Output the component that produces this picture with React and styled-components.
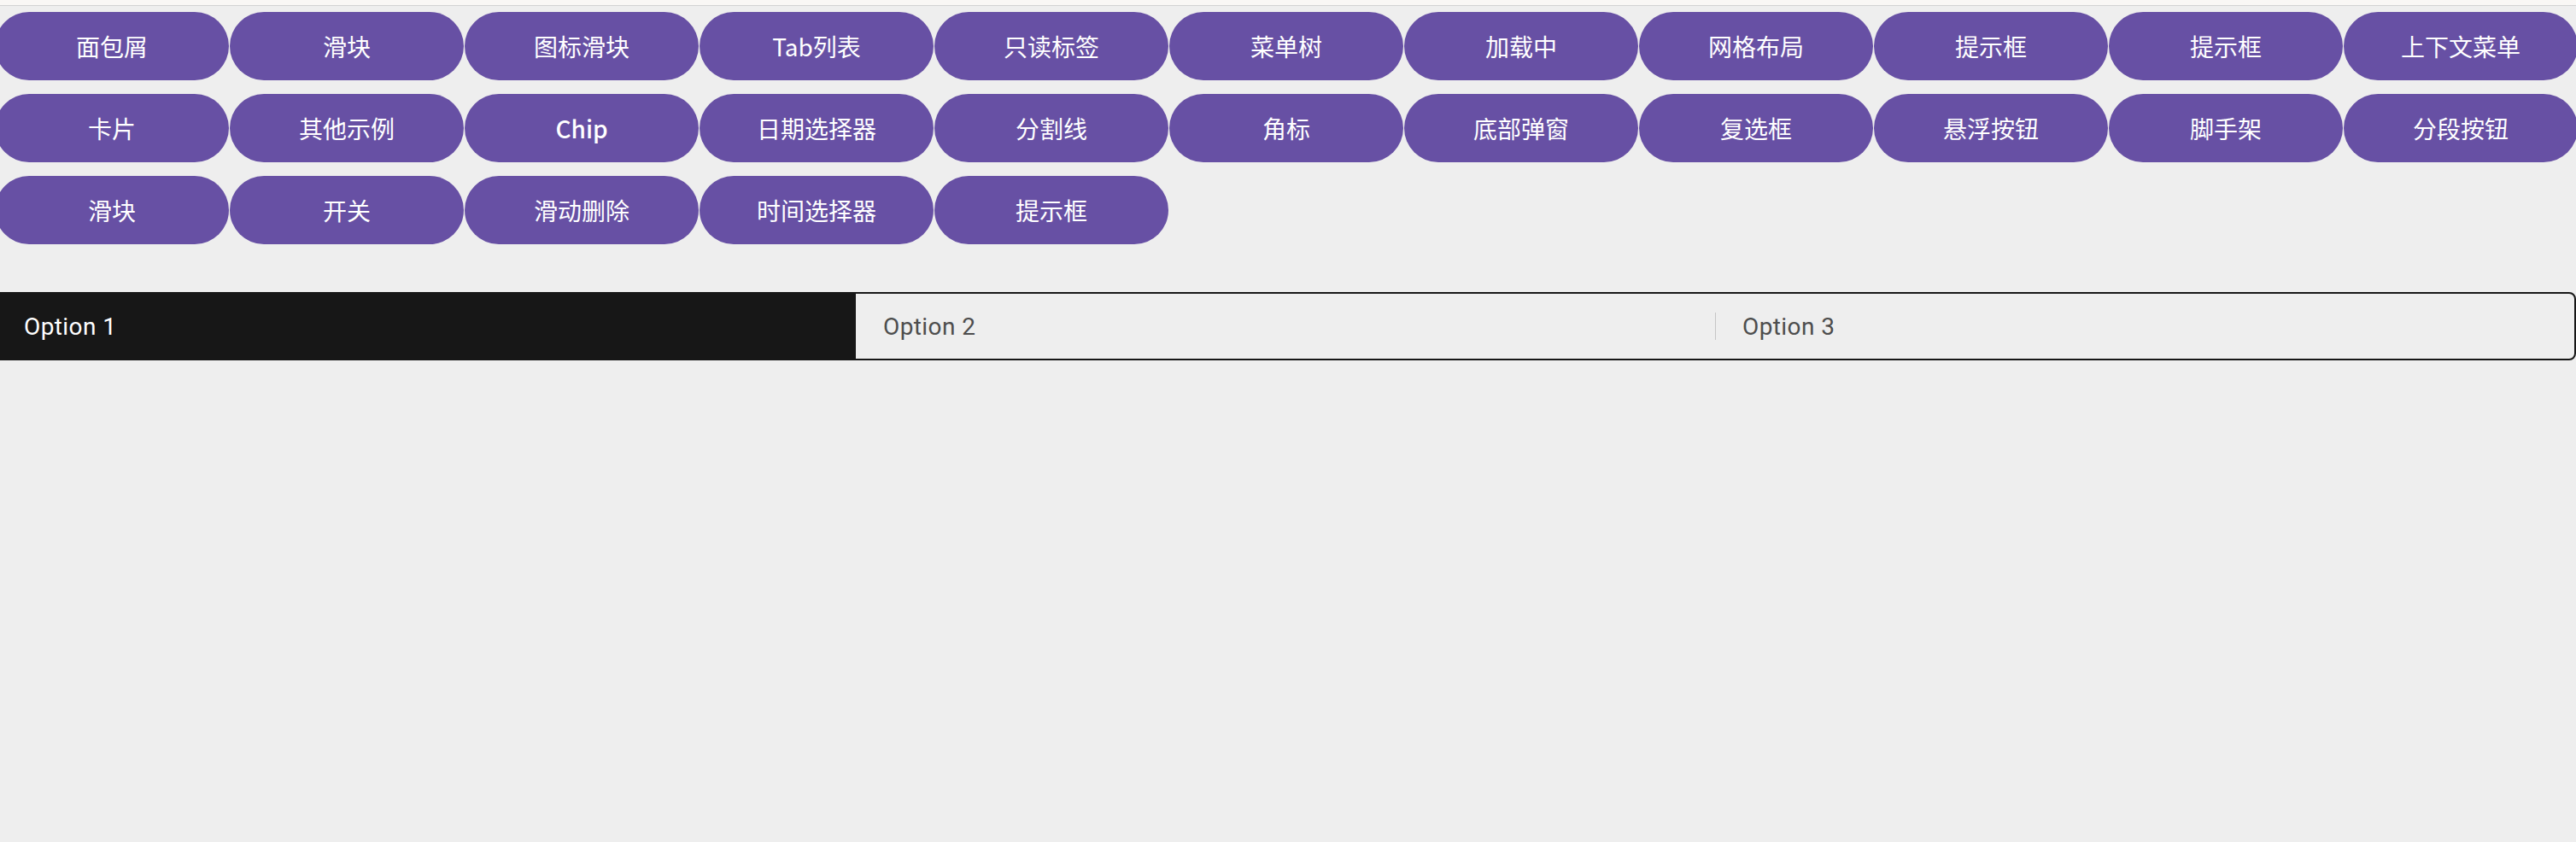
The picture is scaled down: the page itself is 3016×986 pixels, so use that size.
import React, { useState } from 'react';
import styled, { createGlobalStyle } from 'styled-components';

const GlobalStyle = createGlobalStyle`
  html, body {
    margin: 0;
    padding: 0;
    background: #eeeeee;
    overflow: hidden;
  }
  * {
    box-sizing: border-box;
  }
`;

const Page = styled.div`
  width: 3016px;
  min-height: 986px;
  background: #eeeeee;
  overflow: hidden;
  font-family: "Noto Sans CJK SC", "Noto Sans", sans-serif;
`;

const TopStrip = styled.div`
  height: 7px;
  background: #f9f7f5;
  border-bottom: 1px solid #d2d2d2;
`;

const ButtonGrid = styled.div`
  display: grid;
  grid-template-columns: repeat(11, 274px);
  column-gap: 1px;
  row-gap: 16px;
  margin: 7px 0 0 -6px;
`;

const NavButton = styled.button`
  height: 80px;
  border: none;
  border-radius: 40px;
  background: #6750a4;
  color: #ffffff;
  font-family: "Noto Sans CJK SC", "Noto Sans", sans-serif;
  font-size: 28px;
  font-weight: ${(p) => (p.$latin ? 500 : 400)};
  padding: 0 16px;
  cursor: pointer;
  white-space: nowrap;
`;

const Segmented = styled.div`
  display: flex;
  margin: 56px 0 0 -6px;
  width: 3022px;
  height: 80px;
  border: 2px solid #171717;
  border-radius: 0 8px 8px 0;
  overflow: hidden;
`;

const Segment = styled.button`
  flex: 1;
  display: flex;
  align-items: center;
  height: 100%;
  padding: 0 0 0 32px;
  border: none;
  background: ${(p) => (p.$active ? '#171717' : 'transparent')};
  color: ${(p) => (p.$active ? '#ffffff' : '#4d4d4d')};
  font-family: Roboto, "Noto Sans", sans-serif;
  font-size: 28px;
  letter-spacing: 0.4px;
  text-align: left;
  cursor: pointer;
`;

const Divider = styled.span`
  width: 1px;
  height: 32px;
  margin-left: -32px;
  margin-right: 31px;
  background: ${(p) => (p.$hidden ? 'transparent' : '#c6c6c6')};
`;

const labels = [
  '面包屑', '滑块', '图标滑块', 'Tab列表', '只读标签', '菜单树', '加载中', '网格布局', '提示框', '提示框', '上下文菜单',
  '卡片', '其他示例', 'Chip', '日期选择器', '分割线', '角标', '底部弹窗', '复选框', '悬浮按钮', '脚手架', '分段按钮',
  '滑块', '开关', '滑动删除', '时间选择器', '提示框',
];

const options = ['Option 1', 'Option 2', 'Option 3'];

export default function App() {
  const [selected, setSelected] = useState(0);

  return (
    <Page>
      <GlobalStyle />
      <TopStrip />
      <ButtonGrid>
        {labels.map((label, i) => (
          <NavButton key={i} $latin={label === 'Chip'}>{label}</NavButton>
        ))}
      </ButtonGrid>
      <Segmented>
        {options.map((opt, i) => (
          <Segment key={opt} $active={selected === i} onClick={() => setSelected(i)}>
            {i > 0 && <Divider $hidden={selected === i || selected === i - 1} />}
            {opt}
          </Segment>
        ))}
      </Segmented>
    </Page>
  );
}
